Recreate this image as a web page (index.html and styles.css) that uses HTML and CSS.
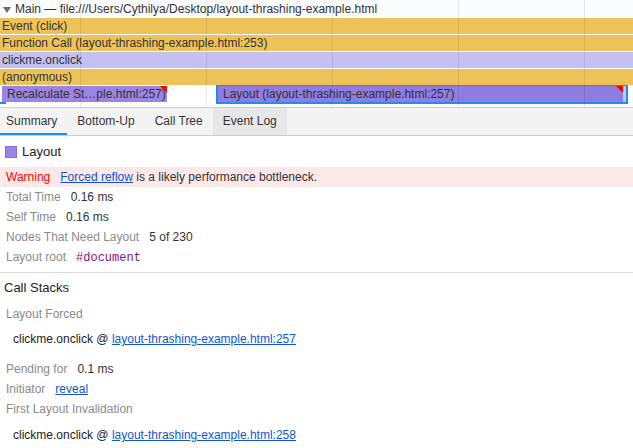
FILE: index.html
```html
<!DOCTYPE html>
<html>
<head>
<meta charset="utf-8">
<link rel="stylesheet" href="styles.css">
</head>
<body>
<div class="chart">
  <div class="chart-header">
    <svg class="caret" width="8" height="6" viewBox="0 0 8 6"><path d="M0 0H8L4 6Z" fill="#6e6e6e"/></svg>
    <span>Main — file:///Users/Cythilya/Desktop/layout-thrashing-example.html</span>
  </div>
  <div class="bar yellow">Event (click)</div>
  <div class="bar yellow">Function Call (layout-thrashing-example.html:253)</div>
  <div class="bar lavender">clickme.onclick</div>
  <div class="bar yellow">(anonymous)</div>
  <div class="bar-row">
    <div class="bar purple recalc">Recalculate St…ple.html:257)<span class="flag"></span></div>
    <div class="selected"><div class="bar purple2 layout-bar">Layout (layout-thrashing-example.html:257)<span class="flag"></span></div></div>
  </div>
  <span class="marker"></span>
  <div class="grid"></div>
</div>
<div class="tabs">
  <div class="tab first active">Summary</div>
  <div class="tab">Bottom-Up</div>
  <div class="tab">Call Tree</div>
  <div class="tab hover">Event Log</div>
</div>
<div class="summary">
  <div class="title"><span class="swatch"></span>Layout</div>
  <div class="warning"><span class="warn-label">Warning</span><a class="link" href="#">Forced reflow</a>&nbsp;is a likely performance bottleneck.</div>
  <div class="row"><span class="label">Total Time</span><span class="value">0.16 ms</span></div>
  <div class="row"><span class="label">Self Time</span><span class="value">0.16 ms</span></div>
  <div class="row"><span class="label">Nodes That Need Layout</span><span class="value">5 of 230</span></div>
  <div class="row"><span class="label">Layout root</span><span class="value mono">#document</span></div>
</div>
<div class="stacks">
  <div class="stacks-title">Call Stacks</div>
  <div class="row sub forced"><span class="label">Layout Forced</span></div>
  <div class="row frame">clickme.onclick @&nbsp;<a class="link" href="#">layout-thrashing-example.html:257</a></div>
  <div class="row pending"><span class="label">Pending for</span><span class="value">0.1 ms</span></div>
  <div class="row"><span class="label">Initiator</span><a class="link value-link" href="#">reveal</a></div>
  <div class="row"><span class="label">First Layout Invalidation</span></div>
  <div class="row frame frame2">clickme.onclick @&nbsp;<a class="link" href="#">layout-thrashing-example.html:258</a></div>
</div>
</body>
</html>
```

FILE: styles.css
```css
html, body {
  margin: 0;
  padding: 0;
  background: #fff;
}
body {
  font-family: "Liberation Sans", Arial, sans-serif;
  font-size: 12px;
  color: #333;
  width: 633px;
  height: 448px;
  overflow: hidden;
}
.chart {
  position: relative;
  height: 107px;
  border-bottom: 1px solid #cdcdcd;
  background: #fff;
}
.chart-header {
  height: 18px;
  display: flex;
  align-items: center;
  padding-left: 3px;
  color: #333;
  background: #fbfcfe;
}
.caret {
  margin-right: 4px;
  margin-top: 1px;
}
.bar {
  position: relative;
  height: 16px;
  line-height: 16px;
  margin-bottom: 1px;
  padding-left: 2px;
  white-space: nowrap;
  overflow: hidden;
  color: #333;
}
.yellow { background: #edc359; }
.lavender { background: #c4c0f0; }
.purple { background: #9b84e4; }
.purple2 { background: #8f7de2; }
.bar-row {
  display: flex;
  align-items: flex-start;
  margin-top: -2px;
}
.recalc {
  margin-top: 2px;
  margin-left: 2px;
  padding-left: 5px;
  box-sizing: content-box;
  width: 160px;
}
.selected {
  margin-left: 49px;
  width: 406px;
  border: 2px solid #1d8ef0;
  background: #c9c3f2;
  padding-right: 2px;
}
.layout-bar {
  margin: 0;
  padding-left: 5px;
  width: 400px;
}
.flag {
  position: absolute;
  top: 0;
  right: 0;
  width: 0;
  height: 0;
  border-top: 7px solid #f00;
  border-left: 7px solid transparent;
}
.marker {
  position: absolute;
  left: 0;
  top: 102px;
  width: 6px;
  height: 2px;
  background: #1d8ef0;
}
.grid {
  position: absolute;
  inset: 0;
  pointer-events: none;
  background-image: repeating-linear-gradient(to right, transparent 0, transparent 125px, rgba(0,0,0,0.09) 125px, rgba(0,0,0,0.09) 126px);
  background-position: -45px 0;
}
.tabs {
  display: flex;
  height: 27px;
  background: #f3f3f3;
  border-bottom: 1px solid #cdcdcd;
}
.tab {
  padding: 0 10px;
  line-height: 27px;
  color: #333;
  box-sizing: border-box;
  height: 27px;
}
.tab.first {
  padding-left: 6px;
}
.tab.active {
  border-bottom: 2px solid #1a8ef0;
  line-height: 26px;
}
.tab.hover {
  background: #e7e7e7;
}
.summary {
  padding-top: 5px;
  padding-bottom: 5px;
  border-bottom: 1px solid #dadada;
}
.title {
  display: flex;
  align-items: center;
  height: 20px;
  padding-left: 5px;
  font-size: 13px;
  color: #222;
}
.swatch {
  width: 10px;
  height: 10px;
  background: #9b84e4;
  border: 1px solid #8670d6;
  margin-right: 5px;
  margin-top: 1px;
}
.warning {
  margin-top: 6px;
  height: 20px;
  display: flex;
  align-items: center;
  background: #fce8e8;
  padding-left: 6px;
  color: #333;
}
.warn-label {
  color: #f00;
  margin-right: 10px;
}
.link {
  color: #1155cc;
  text-decoration: underline;
}
.value-link {
  margin-left: 10px;
}
.row {
  height: 20px;
  line-height: 20px;
  padding-left: 6px;
  white-space: nowrap;
}
.label {
  color: #8a8a8a;
}
.value {
  margin-left: 10px;
  color: #333;
}
.mono {
  font-family: "Liberation Mono", "Courier New", monospace;
  color: #881280;
}
.stacks {
  padding-top: 5px;
}
.stacks-title {
  height: 20px;
  line-height: 20px;
  padding-left: 4px;
  font-size: 13px;
  color: #222;
}
.forced {
  margin-top: 6px;
}
.frame {
  margin-top: 5px;
  padding-left: 13px;
  color: #222;
}
.pending {
  margin-top: 10px;
}
.frame2 {
  margin-top: 6px;
}
```
